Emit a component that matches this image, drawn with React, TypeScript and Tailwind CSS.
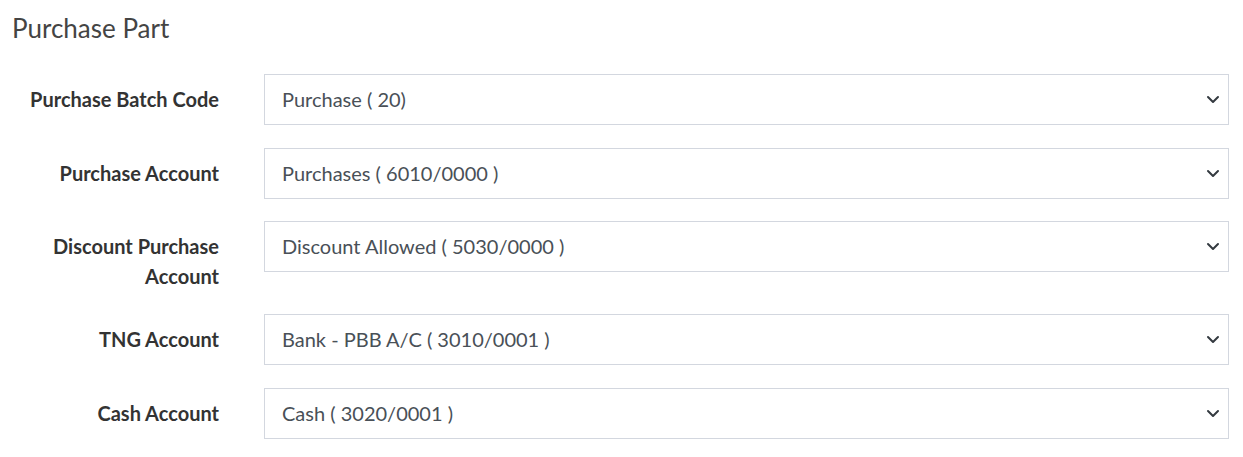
import React from "react";

const rows = [
  { label: "Purchase Batch Code", value: "Purchase ( 20)", gap: "mb-[23px]" },
  { label: "Purchase Account", value: "Purchases ( 6010/0000 )", gap: "mb-[22px]" },
  { label: "Discount Purchase Account", value: "Discount Allowed ( 5030/0000 )", gap: "mb-[23px]" },
  { label: "TNG Account", value: "Bank - PBB A/C ( 3010/0001 )", gap: "mb-[23px]" },
  { label: "Cash Account", value: "Cash ( 3020/0001 )", gap: "mb-[23px]" },
];

function Chevron() {
  return (
    <svg width="14" height="10" viewBox="0 0 14 10" className="shrink-0">
      <path d="M2 3 L7 8 L12 3" fill="none" stroke="#343a40" strokeWidth="2" strokeLinecap="round" strokeLinejoin="round" />
    </svg>
  );
}

export default function App() {
  return (
    <div className="w-[1243px] h-[457px] bg-white pl-[12px] pt-[12px] pr-[14px]" style={{ fontFamily: "Lato, 'Noto Sans', sans-serif" }}>
      <h2 className="text-[26px] leading-[32px] text-[#444444] font-normal">Purchase Part</h2>
      <div className="mt-[30px]">
        {rows.map((r) => (
          <div key={r.label} className={`flex items-start ${r.gap}`}>
            <label className="w-[252px] shrink-0 pl-[10px] pr-[45px] pt-[10px] text-right text-[20px] leading-[30px] font-bold text-[#333333]">
              {r.label}
            </label>
            <div className="flex-1 h-[51px] border border-[#d3d7df] flex items-center justify-between pl-[17px] pr-[8px] pb-[1px]">
              <span className="text-[20px] text-[#495057]">{r.value}</span>
              <Chevron />
            </div>
          </div>
        ))}
      </div>
    </div>
  );
}
